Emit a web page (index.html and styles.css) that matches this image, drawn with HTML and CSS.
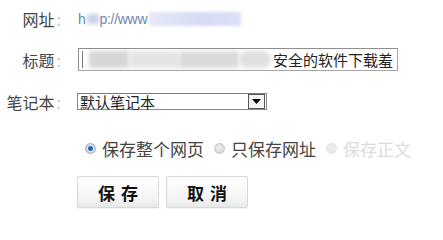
FILE: index.html
```html
<!DOCTYPE html>
<html>
<head>
<meta charset="utf-8">
<link rel="stylesheet" href="styles.css">
</head>
<body>
<div class="form">
  <div class="row row-url">
    <div class="label">网址<span class="colon">:</span></div>
    <div class="url"><span class="url-text">h<span class="blur-dot"></span>p://www</span><span class="url-blur"></span></div>
  </div>
  <div class="row row-title">
    <div class="label">标题<span class="colon">:</span></div>
    <div class="input">
      <span class="caret"></span>
      <span class="blur b1"></span><span class="blur b2"></span><span class="blur b3"></span><span class="blur b4"></span>
      <span class="input-text">安全的软件下载羞</span>
    </div>
  </div>
  <div class="row row-note">
    <div class="label">笔记本<span class="colon">:</span></div>
    <div class="select">
      <span class="select-text">默认笔记本</span>
      <span class="select-btn"><svg width="9" height="5" viewBox="0 0 9 5"><path d="M0 0H9L4.5 5Z" fill="#000"/></svg></span>
    </div>
  </div>
  <div class="row row-radio">
    <div class="radio checked"><span class="dot"></span>保存整个网页</div>
    <div class="radio"><span class="dot"></span>只保存网址</div>
    <div class="radio disabled"><span class="dot"></span>保存正文</div>
  </div>
  <div class="row row-btn">
    <div class="btn">保存</div>
    <div class="btn">取消</div>
  </div>
</div>
</body>
</html>
```
FILE: styles.css
```css
html, body {
  margin: 0;
  padding: 0;
  background: #fff;
}
body {
  font-family: "Noto Sans CJK SC", "Noto Sans", sans-serif;
  color: #333;
  width: 443px;
  height: 240px;
  overflow: hidden;
}
.form {
  display: flex;
  flex-direction: column;
}
.row {
  display: flex;
  align-items: center;
}
.label {
  width: 61px;
  text-align: right;
  font-size: 16px;
  color: #444;
  margin-right: 17px;
  white-space: nowrap;
  line-height: 18px;
}
.colon {
  color: #c4c4c4;
  margin-left: 2px;
}
.row-url {
  height: 38px;
}
.url {
  display: flex;
  align-items: center;
  height: 18px;
}
.url-text {
  font-family: "Liberation Sans", sans-serif;
  font-size: 14px;
  color: #6c86b0;
  letter-spacing: -0.3px;
  display: flex;
  align-items: center;
}
.blur-dot {
  display: inline-block;
  width: 12px;
  height: 10px;
  background: #c8d0e6;
  filter: blur(2px);
  margin: 0 1px;
}
.url-blur {
  display: inline-block;
  width: 92px;
  height: 14px;
  background: linear-gradient(90deg, #e6e8f8, #d6dbf4 60%, #dde0f6);
  filter: blur(1.5px);
  margin-left: 2px;
}
.row-title {
  height: 23px;
  margin-top: 10px;
}
.input {
  width: 318px;
  height: 21px;
  border: 1px solid #a7a7a7;
  border-top-color: #8e8e8e;
  border-left-color: #8e8e8e;
  display: flex;
  align-items: center;
  position: relative;
  overflow: hidden;
  box-sizing: content-box;
}
.caret {
  position: absolute;
  left: 3px;
  top: 2px;
  width: 2px;
  height: 17px;
  border-left: 1px solid #777;
}
.blur {
  display: inline-block;
  height: 17px;
  filter: blur(2px);
}
.b1 { width: 40px; background: #d6d6d6; margin-left: 10px; }
.b2 { width: 50px; background: #e4e4e4; }
.b3 { width: 60px; background: #dadada; }
.b4 { width: 32px; background: #e0e0e0; border-radius: 8px; }
.input-text {
  font-size: 15px;
  color: #222;
  margin-left: auto;
  margin-right: 4px;
  white-space: nowrap;
}
.row-note {
  height: 17px;
  margin-top: 22px;
}
.row-note .label {
  margin-right: 16px;
}
.select {
  width: 188px;
  height: 15px;
  border: 1px solid #8a8a8a;
  border-top-color: #7a7a7a;
  display: flex;
  align-items: center;
  justify-content: space-between;
  box-sizing: content-box;
}
.select-text {
  font-size: 15px;
  color: #222;
  margin-left: 2px;
  line-height: 15px;
}
.select-btn {
  width: 15px;
  height: 13px;
  border: 1px solid #555;
  margin-right: 1px;
  display: flex;
  align-items: center;
  justify-content: center;
  background: #f4f4f4;
}
.row-radio {
  height: 20px;
  margin-top: 28px;
  padding-left: 85px;
  gap: 10px;
}
.radio {
  display: flex;
  align-items: center;
  font-size: 17px;
  color: #444;
  white-space: nowrap;
}
.radio .dot {
  width: 11px;
  height: 11px;
  border-radius: 50%;
  background: radial-gradient(circle at 45% 40%, #f2f2f2, #c9c9c9);
  border: 1px solid #c6c6c6;
  margin-right: 6px;
  box-sizing: border-box;
}
.radio.checked .dot {
  background: radial-gradient(circle, #1d5b99 0, #2f6db0 2px, #dde6ee 3px, #c0cbd6 5px);
  border-color: #9eb0c2;
}
.radio.disabled {
  color: #dcdcdc;
}
.radio.disabled .dot {
  background: #ececec;
  border-color: #e4e4e4;
}
.row-btn {
  margin-top: 18px;
  padding-left: 77px;
  gap: 7px;
}
.btn {
  width: 74px;
  height: 30px;
  border: 1px solid #d8d8d8;
  border-radius: 2px;
  background: linear-gradient(#ffffff, #f4f4f4 70%, #e9e9e9);
  display: flex;
  align-items: center;
  justify-content: center;
  font-weight: bold;
  font-size: 17px;
  letter-spacing: 6px;
  padding-left: 6px;
  box-sizing: content-box;
  color: #111;
  box-shadow: 0 1px 1px rgba(0,0,0,0.05);
}
```
